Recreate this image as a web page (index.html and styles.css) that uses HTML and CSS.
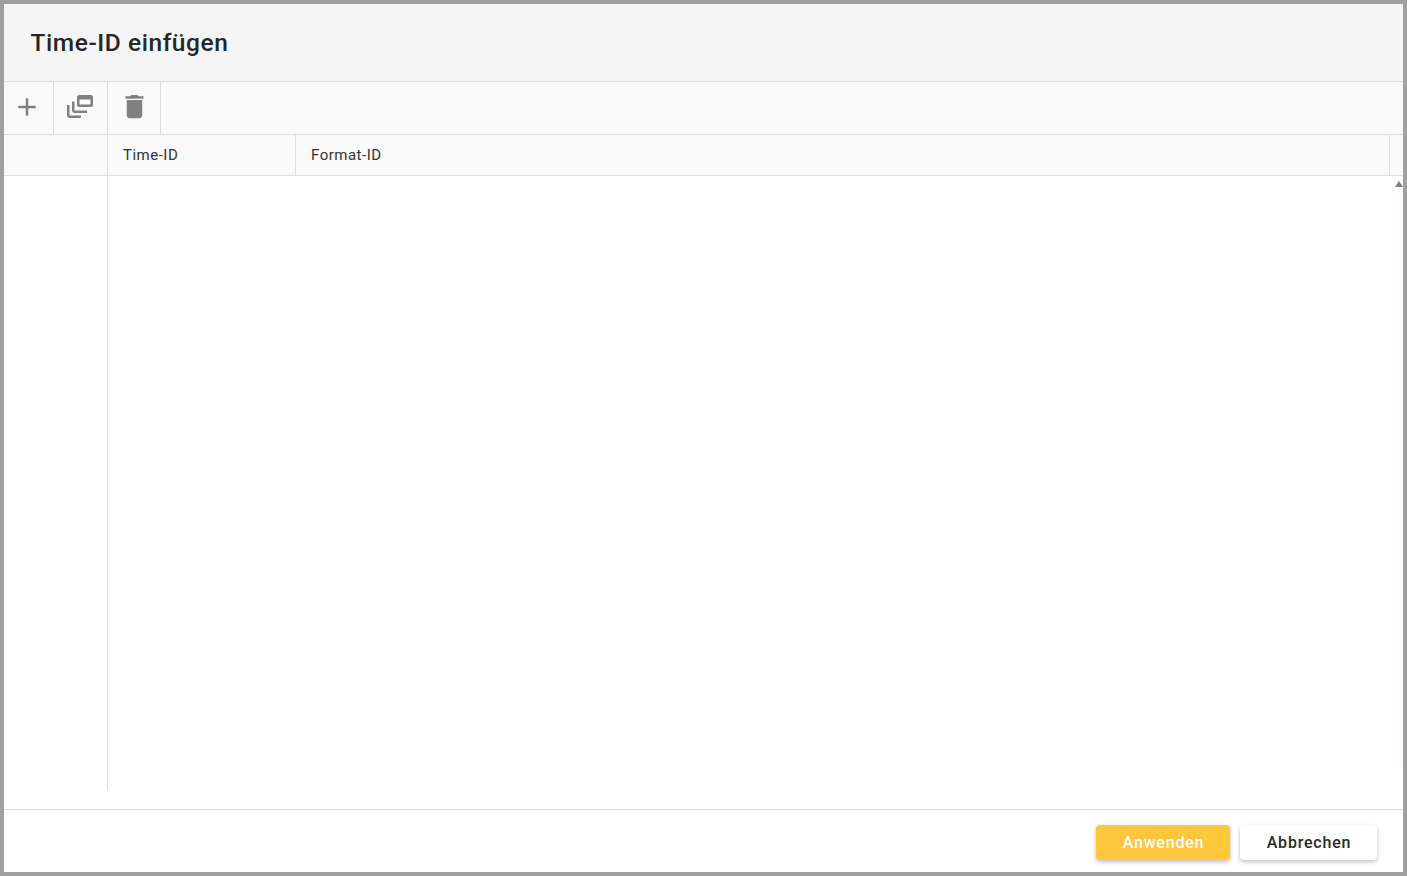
FILE: index.html
```html
<!DOCTYPE html>
<html lang="de">
<head>
<meta charset="utf-8">
<title>Time-ID einfügen</title>
<link rel="stylesheet" href="styles.css">
</head>
<body>
<div class="dialog">
  <header class="title-bar"><h1 class="title">Time-ID einfügen</h1></header>
  <div class="toolbar">
    <button class="tool tool-add" aria-label="Hinzufügen">
      <svg class="icon" viewBox="0 0 24 24"><path d="M19 13h-6v6h-2v-6H5v-2h6V5h2v6h6v2z"/></svg>
    </button>
    <button class="tool tool-copy" aria-label="Kopieren">
      <svg class="icon icon-copy" viewBox="0 0 26 23"><path d="M0 10h2.500v10.500H14V23H3a3 3 0 0 1-3-3z"/><path d="M5 6.500h2.500v9H20V18H8a3 3 0 0 1-3-3z"/><path fill-rule="evenodd" d="M12 0h12a2 2 0 0 1 2 2v8a2 2 0 0 1-2 2H12a2 2 0 0 1-2-2V2a2 2 0 0 1 2-2zm.500 4.500v5h11v-5z"/></svg>
    </button>
    <button class="tool tool-delete" aria-label="Löschen">
      <svg class="icon icon-trash" viewBox="0 0 24 24"><path d="M6 19c0 1.1.9 2 2 2h8c1.100 0 2-.9 2-2V7H6v12zM19 4h-3.500l-1-1h-5l-1 1H5v2h14V4z"/></svg>
    </button>
  </div>
  <div class="table-head">
    <div class="cell cell-index"></div>
    <div class="cell cell-time">Time-ID</div>
    <div class="cell cell-format">Format-ID</div>
    <div class="cell cell-end"></div>
  </div>
  <div class="table-body">
    <div class="body-index"></div>
    <div class="body-rows"></div>
    <div class="scrollbar"><span class="scroll-up"></span></div>
  </div>
  <footer class="footer">
    <button class="btn btn-primary">Anwenden</button>
    <button class="btn btn-secondary">Abbrechen</button>
  </footer>
</div>
</body>
</html>
```
FILE: styles.css
```css
* { box-sizing: border-box; }
html, body { margin: 0; height: 100%; }
body { font-family: Roboto, "Liberation Sans", sans-serif; background: #fff; overflow: hidden; }
.dialog { width: 1407px; height: 876px; border: 4px solid #a0a0a0; display: flex; flex-direction: column; background: #fff; }
.title-bar { height: 78px; flex: none; background: #f5f5f5; border-bottom: 1px solid #dcdcdc; padding-left: 26.500px; display: flex; align-items: center; }
.title { margin: 0; font-size: 24.500px; font-weight: 500; color: #262626; letter-spacing: .56px; }
.toolbar { height: 53px; flex: none; background: #fafafa; border-bottom: 1px solid #dcdcdc; display: flex; }
.tool { border: 0; border-right: 1px solid #dcdcdc; background: none; padding: 0; display: flex; align-items: center; justify-content: center; }
.tool-add { width: 50px; padding-right: 4px; }
.tool-copy { width: 54px; padding-right: 1px; }
.tool-delete { width: 53px; }
.icon { width: 30px; height: 30px; fill: #808080; display: block; margin-bottom: 2px; }
.icon-copy { width: 26px; height: 23px; margin-bottom: 3px; }
.icon-trash { width: 31px; height: 31px; margin-bottom: 3px; }
.table-head { height: 41px; flex: none; background: #fafafa; border-bottom: 1px solid #e0e0e0; display: flex; font-size: 15px; color: #333; }
.cell { flex: none; border-right: 1px solid #e0e0e0; padding-left: 15px; display: flex; align-items: center; letter-spacing: .5px; }
.cell-index { width: 104px; }
.cell-time { width: 188px; }
.cell-format { width: 1094px; }
.cell-end { flex: 1; border-right: 0; padding-left: 0; }
.table-body { height: 633px; flex: none; display: flex; position: relative; }
.body-index { width: 104px; height: 614px; border-right: 1px solid #dcdcdc; flex: none; }
.body-rows { flex: 1; }
.scrollbar { width: 11px; height: 592px; background: #fcfcfc; flex: none; position: relative; }
.scroll-up { position: absolute; left: 3px; top: 5px; border-left: 4px solid transparent; border-right: 4px solid transparent; border-bottom: 6px solid #808080; }
.footer { flex: 1; border-top: 1px solid #dcdcdc; display: flex; justify-content: flex-end; align-items: flex-start; gap: 10px; padding: 15px 26px 0 0; }
.btn { height: 35px; border: 0; border-radius: 4px; font-family: inherit; font-size: 16px; font-weight: 500; letter-spacing: .8px; box-shadow: 0 2px 4px rgba(0,0,0,.25); padding: 0 0 0 1px; }
.btn-primary { width: 134px; background: #ffc73c; color: #fff; }
.btn-secondary { width: 137px; background: #fff; color: #292929; }
```
